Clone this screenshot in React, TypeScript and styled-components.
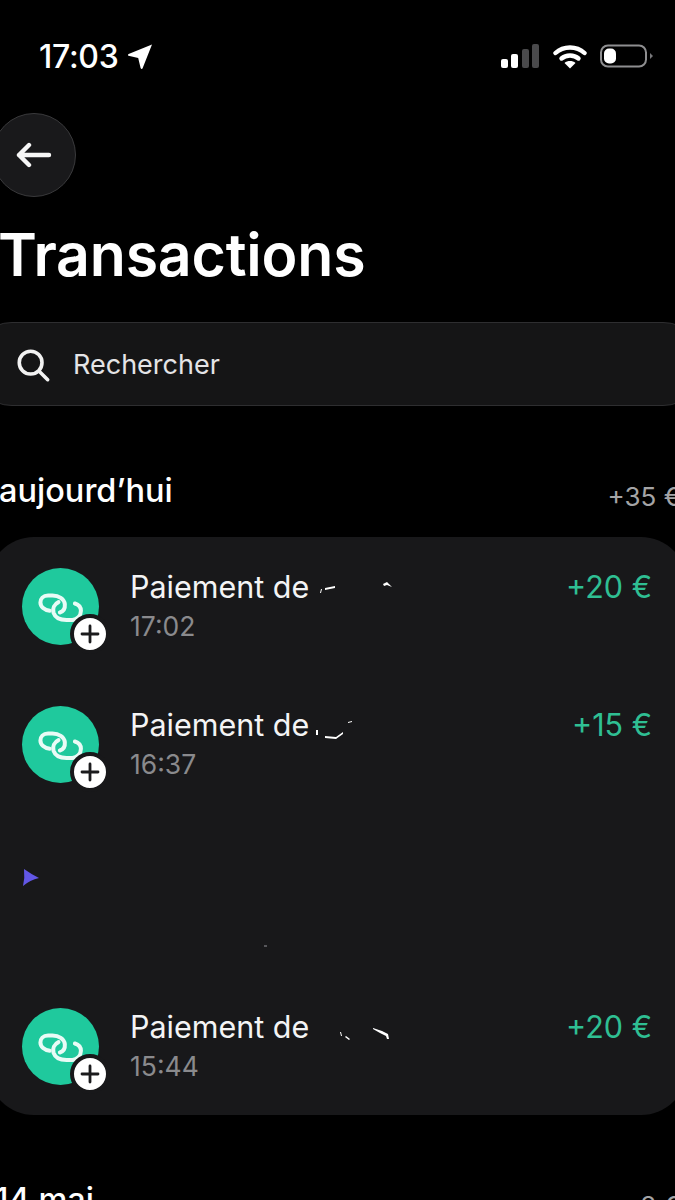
import React from "react";
import styled, { createGlobalStyle } from "styled-components";

const Global = createGlobalStyle`
  html, body { margin: 0; padding: 0; background: #000; }
  body { font-family: "Inter", "Liberation Sans", sans-serif; color: #fff; }
`;

const Screen = styled.div`
  width: 675px;
  height: 1200px;
  overflow: hidden;
  background: #000;
  display: flex;
  flex-direction: column;
`;

const StatusBar = styled.div`
  height: 113px;
  flex: none;
  padding: 36px 21px 0 39px;
  box-sizing: border-box;
  display: flex;
  justify-content: space-between;
  align-items: flex-start;
`;

const Clock = styled.div`
  display: flex;
  align-items: center;
  gap: 9px;
  height: 40px;
  font-size: 32px;
  font-weight: 500;
  letter-spacing: -0.3px;
`;

const StatusIcons = styled.div`
  display: flex;
  align-items: center;
  margin-top: 8px;
`;

const BackButton = styled.div`
  width: 84px;
  height: 84px;
  flex: none;
  margin-left: -8px;
  border-radius: 50%;
  background: #19191b;
  border: 1px solid #3a3a3c;
  box-sizing: border-box;
  display: flex;
  align-items: center;
  justify-content: center;
`;

const Title = styled.h1`
  margin: 24px 0 0 -2px;
  font-size: 59px;
  line-height: 68px;
  font-weight: 600;
  letter-spacing: -0.2px;
  white-space: nowrap;
`;

const SearchBar = styled.div`
  height: 84px;
  flex: none;
  margin: 33px -30px 0 -30px;
  padding: 1px 0 0 44px;
  box-sizing: border-box;
  border-radius: 42px;
  background: #151516;
  border: 1px solid #2e2e30;
  display: flex;
  align-items: center;
  gap: 22px;
  font-size: 27px;
  color: #e4e4e6;
`;

const SectionHead = styled.div<{ $inset?: number }>`
  display: flex;
  justify-content: space-between;
  align-items: flex-start;
  margin: 63px -6px 0 ${(p) => p.$inset ?? -1}px;
  height: 68px;
  flex: none;
`;

const SectionName = styled.div`
  font-size: 32.5px;
  line-height: 44px;
  font-weight: 500;
`;

const SectionSum = styled.div`
  font-size: 26px;
  line-height: 32px;
  margin-top: 12px;
  color: #a4a4a6;
  white-space: nowrap;
`;

const Card = styled.div`
  flex: none;
  margin: 0 -12px;
  height: 578px;
  box-sizing: border-box;
  padding: 31px 35px 30px 34px;
  border-radius: 46px;
  background: #18181a;
  display: flex;
  flex-direction: column;
  gap: 61px;
`;

const Row = styled.div<{ $h?: number }>`
  display: flex;
  align-items: flex-start;
  height: ${(p) => p.$h ?? 77}px;
  position: relative;
  flex: none;
`;

const Avatar = styled.div`
  position: relative;
  width: 77px;
  height: 77px;
  flex: none;
  border-radius: 50%;
  background: #1fc99d;
  margin-right: 31px;
`;

const Badge = styled.div`
  position: absolute;
  right: -11px;
  bottom: -9px;
  width: 32px;
  height: 32px;
  border-radius: 50%;
  background: #fff;
  border: 4px solid #18181a;
  display: flex;
  align-items: center;
  justify-content: center;
`;

const RowText = styled.div`
  flex: 1;
  position: relative;
`;

const RowTitle = styled.div`
  font-size: 30.5px;
  line-height: 38px;
  color: #f4f4f5;
`;

const RowTime = styled.div`
  font-size: 26.5px;
  line-height: 38px;
  color: #8a8a8d;
  margin-top: 1px;
`;

const Amount = styled.div`
  font-size: 30.5px;
  line-height: 38px;
  color: #2fbf93;
`;

const Redaction = styled.svg`
  position: absolute;
  top: 0;
  left: 180px;
`;

const Fleck = styled.svg`
  position: absolute;
  left: 0;
  top: 25px;
`;

const Smudge = styled.div`
  position: absolute;
  left: 242px;
  top: 101px;
  width: 3px;
  height: 2px;
  background: #56565a;
`;

const SignalBars = () => (
  <svg width="40" height="25" viewBox="0 0 40 25">
    <rect x="1" y="15" width="7" height="9" rx="2" fill="#fff" />
    <rect x="11" y="10" width="7" height="14" rx="2" fill="#fff" />
    <rect x="22" y="5" width="7" height="19" rx="2" fill="#4a4a4c" />
    <rect x="32" y="0" width="7" height="24" rx="2" fill="#4a4a4c" />
  </svg>
);

const Wifi = () => (
  <svg width="34" height="25" viewBox="0 0 34 25" style={{ marginLeft: 13 }}>
    <path d="M2.5 9C10.5 1.6 23.5 1.6 31.5 9" fill="none" stroke="#fff" strokeWidth="4.4" strokeLinecap="round" />
    <path d="M8.5 14.5C13 10.4 21 10.4 25.5 14.5" fill="none" stroke="#fff" strokeWidth="4.4" strokeLinecap="round" />
    <path d="M17 24.5L11.5 19C14.5 16.4 19.5 16.4 22.5 19Z" fill="#fff" />
  </svg>
);

const Battery = () => (
  <svg width="54" height="25" viewBox="0 0 54 25" style={{ marginLeft: 13 }}>
    <rect x="1" y="1.5" width="45" height="21" rx="7" fill="none" stroke="#8e8e90" strokeWidth="2" />
    <rect x="4" y="4.5" width="12" height="15" rx="5" fill="#fff" />
    <path d="M50 9L53 12L50 15Z" fill="#77777a" />
  </svg>
);

const LinkGlyph = () => (
  <svg width="77" height="77" viewBox="37 22 230 230" fill="none" stroke="#e9fbf6" strokeWidth="12" strokeLinecap="round">
    <path d="M150 155C160 152 166 143 165 130C163 114 147 104 128 104L115 104C100 104 92 114 92 125C92 138 104 148 120 150" />
    <path d="M146 124C133 130 128 143 131 155C136 170 150 177 170 177L187 177C202 177 213 165 213 150C213 139 205 131 195 128" />
  </svg>
);

const PlusGlyph = () => (
  <svg width="20" height="20" viewBox="0 0 20 20" stroke="#1b1b1d" strokeWidth="2.8" strokeLinecap="round">
    <path d="M10 2V18M2 10H18" />
  </svg>
);

type Tx = { time: string; amount: string; marks: string; markW: number };

const Transaction = ({ time, amount, marks, markW }: Tx) => (
  <Row>
    <Avatar>
      <LinkGlyph />
      <Badge>
        <PlusGlyph />
      </Badge>
    </Avatar>
    <RowText>
      <RowTitle>Paiement de</RowTitle>
      <Redaction width={markW} height="40" viewBox={`0 0 ${markW} 40`} fill="#fff">
        <path d={marks} />
      </Redaction>
      <RowTime>{time}</RowTime>
    </RowText>
    <Amount>{amount}</Amount>
  </Row>
);

export default function App() {
  return (
    <Screen>
      <Global />
      <StatusBar>
        <Clock>
          17:03
          <svg width="26" height="26" viewBox="0 0 26 26">
            <path d="M25 1.5L15.5 25.5C15 26.2 14 26 13.6 25L11.2 15L1.5 12.8C.8 12.4.8 11.4 1.6 11Z" fill="#fff" />
          </svg>
        </Clock>
        <StatusIcons>
          <SignalBars />
          <Wifi />
          <Battery />
        </StatusIcons>
      </StatusBar>
      <BackButton>
        <svg width="36" height="26" viewBox="0 0 36 26" fill="none" stroke="#f6f6f6" strokeWidth="4.4" strokeLinecap="round" strokeLinejoin="round">
          <path d="M3 13H33M13 3L3 13L13 23" />
        </svg>
      </BackButton>
      <Title>Transactions</Title>
      <SearchBar>
        <svg width="36" height="36" viewBox="0 0 38 38" fill="none" stroke="#f2f2f2" strokeWidth="3.8" strokeLinecap="round">
          <circle cx="16.5" cy="16.5" r="12" />
          <path d="M25.5 25.5L34.5 34.5" />
        </svg>
        Rechercher
      </SearchBar>
      <SectionHead>
        <SectionName>aujourd’hui</SectionName>
        <SectionSum>+35 €</SectionSum>
      </SectionHead>
      <Card>
        <Transaction time="17:02" amount="+20 €" markW={90} marks="M10 25L11 21L12 21L11 25ZM15 20L25 18L25 20L15 22ZM73 16L77 14L82 19L77 17L74 18Z" />
        <Transaction time="16:37" amount="+15 €" markW={50} marks="M6 24L8 24L8 29L6 29ZM15 30L26 31L33 26L33 28L26 33L15 32ZM38 16L42 15L42 16L38 17Z" />
        <Row $h={103}>
          <Fleck width="18" height="18" viewBox="0 0 18 18">
            <path d="M2 0Q9 5 17 9Q8 11 1 17Q3 9 2 0Z" fill="#6257e6" />
          </Fleck>
          <Smudge />
        </Row>
        <Transaction time="15:44" amount="+20 €" markW={90} marks="M30 24L31 24L32 28L31 28ZM36 28L40 31L39 32L35 29ZM63 20L72 23L78 26L79 31L77 31L76 28L70 25L63 21Z" />
      </Card>
      <SectionHead $inset={-5}>
        <SectionName>14 mai</SectionName>
        <SectionSum>8 €</SectionSum>
      </SectionHead>
    </Screen>
  );
}
